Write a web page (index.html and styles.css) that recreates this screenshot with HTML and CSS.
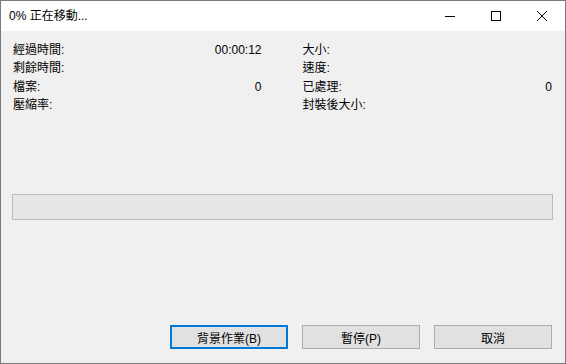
FILE: index.html
```html
<!DOCTYPE html>
<html lang="zh-Hant">
<head>
<meta charset="utf-8">
<link rel="stylesheet" href="styles.css">
</head>
<body>
<div class="window">
  <div class="titlebar">
    <div class="title">0% 正在移動...</div>
    <div class="controls">
      <div class="ctl"><svg width="10" height="10" viewBox="0 0 10 10"><path d="M0 5.5H10" stroke="#000" stroke-width="1"/></svg></div>
      <div class="ctl"><svg width="10" height="10" viewBox="0 0 10 10"><rect x="0.5" y="0.5" width="9" height="9" fill="none" stroke="#000" stroke-width="1"/></svg></div>
      <div class="ctl"><svg width="10" height="10" viewBox="0 0 10 10"><path d="M0 0L10 10M10 0L0 10" stroke="#000" stroke-width="1"/></svg></div>
    </div>
  </div>
  <div class="content">
    <div class="stats">
      <div class="col">
        <div class="row"><span>經過時間:</span><span>00:00:12</span></div>
        <div class="row"><span>剩餘時間:</span><span></span></div>
        <div class="row"><span>檔案:</span><span>0</span></div>
        <div class="row"><span>壓縮率:</span><span></span></div>
      </div>
      <div class="col">
        <div class="row"><span>大小:</span><span></span></div>
        <div class="row"><span>速度:</span><span></span></div>
        <div class="row"><span>已處理:</span><span>0</span></div>
        <div class="row"><span>封裝後大小:</span><span></span></div>
      </div>
    </div>
    <div class="progress"></div>
    <div class="buttons">
      <button class="btn default">背景作業(B)</button>
      <button class="btn">暫停(P)</button>
      <button class="btn">取消</button>
    </div>
  </div>
</div>
</body>
</html>
```

FILE: styles.css
```css
* { box-sizing: border-box; }
html, body { margin: 0; padding: 0; }
body {
  width: 566px;
  height: 364px;
  font-family: "Liberation Sans", "Noto Sans CJK TC", sans-serif;
  font-size: 12px;
  color: #000;
  background: #f0f0f0;
}
.window {
  width: 566px;
  height: 364px;
  border: 1px solid #7a7a7a;
  display: flex;
  flex-direction: column;
  background: #f0f0f0;
}
.titlebar {
  height: 30px;
  background: #fff;
  display: flex;
  align-items: center;
  justify-content: space-between;
}
.title {
  padding-left: 8px;
  font-size: 12px;
  line-height: 30px;
}
.controls { display: flex; height: 30px; }
.ctl {
  width: 46px;
  height: 30px;
  display: flex;
  align-items: center;
  justify-content: center;
}
.ctl svg { display: block; }
.content {
  flex: 1;
  display: flex;
  flex-direction: column;
  padding: 10px 13px 14px 11px;
}
.stats {
  display: flex;
  gap: 41px;
  padding-left: 1px;
}
.col { width: 250px; }
.col:first-child { width: 249px; }
.row {
  display: flex;
  justify-content: space-between;
  height: 18.33px;
  line-height: 18px;
  white-space: nowrap;
}
.progress {
  margin-top: 80px;
  margin-right: -1px;
  height: 26px;
  border: 1px solid #bcbcbc;
  background: #e6e6e6;
}
.buttons {
  margin-top: auto;
  display: flex;
  justify-content: flex-end;
  gap: 14px;
}
.btn {
  width: 118px;
  height: 24px;
  font-family: "Liberation Sans", "Noto Sans CJK TC", sans-serif;
  font-size: 12px;
  color: #000;
  background: #e1e1e1;
  border: 1px solid #adadad;
  padding: 0;
}
.btn.default {
  border: 2px solid #0078d7;
}
```
